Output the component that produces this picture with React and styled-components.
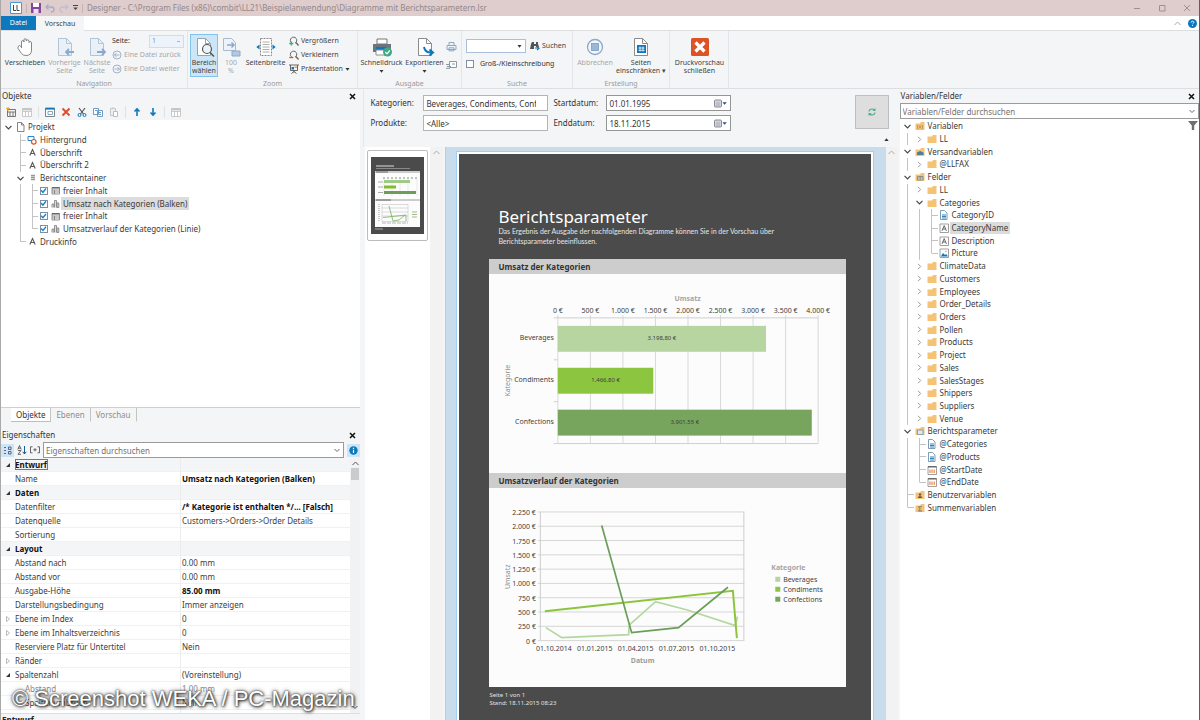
import React from "react";
import styled, { createGlobalStyle, css } from "styled-components";

const GlobalStyle = createGlobalStyle`
  *, *::before, *::after { box-sizing: border-box; }
  html, body { margin: 0; height: 100%; }
  body {
    font-family: "Noto Sans", "Open Sans", sans-serif;
    font-size: 8px;
    line-height: 12px;
    color: #333;
    background: #f4f5f6;
    overflow: hidden;
  }
  #root { height: 100%; }
  button, input, select { font: inherit; color: inherit; margin: 0; }
  button { background: none; border: 0; padding: 0; cursor: pointer; white-space: nowrap; }
  svg { display: block; flex: none; }
  p, h1, h2 { margin: 0; }
`;

const c = {
  blue: "#0d78bd",
  pale: "#cce6f8",
  line: "#dcdfe2",
  chrome: "#f4f5f6",
  muted: "#9a9a9a",
  folder: "#f5c376",
  paper: "#4b4b4b",
};

/* ---------- window ---------- */
const Window = styled.div`
  height: 100vh;
  display: flex;
  flex-direction: column;
  border-left: 1px solid #a9a9a9;
  border-right: 1px solid #6b5a5a;
  background: ${c.chrome};
`;
const TitleBar = styled.header`
  height: 16px;
  flex: none;
  display: flex;
  align-items: center;
  gap: 4px;
  padding: 0 8px 0 9px;
  background: #dfcccd;
  color: #938888;
`;
const TitleText = styled.h1`
  flex: 1;
  font-size: 8px;
  font-weight: 400;
  white-space: nowrap;
`;
const TitleSep = styled.span`
  width: 1px;
  height: 9px;
  background: #c7b3b4;
`;
const WindowButtons = styled.div`
  display: flex;
  gap: 17px;
`;
const TabRow = styled.nav`
  height: 15px;
  flex: none;
  display: flex;
  align-items: stretch;
  background: #fff;
  border-bottom: 1px solid ${c.line};
`;
const RibbonTab = styled.button`
  width: ${(p) => (p.$file ? 35 : 48)}px;
  font-size: 7px;
  color: ${(p) => (p.$file ? "#fff" : "#444")};
  background: ${(p) => (p.$file ? c.blue : c.chrome)};
  height: ${(p) => (p.$file ? 14 : 15)}px;
`;
const TabTools = styled.div`
  margin-left: auto;
  display: flex;
  align-items: center;
  gap: 7px;
  padding-right: 2px;
`;

/* ---------- ribbon ---------- */
const Ribbon = styled.div`
  height: 58px;
  flex: none;
  display: flex;
  font-size: 7px;
  line-height: 8px;
  border-bottom: 1px solid ${c.line};
`;
const Group = styled.section`
  width: ${(p) => p.$w}px;
  flex: none;
  display: flex;
  flex-direction: column;
  border-right: 1px solid #e3e5e8;
  padding: 3px 2px 0;
`;
const GroupBody = styled.div`
  height: 43px;
  display: flex;
`;
const GroupName = styled.div`
  text-align: center;
  color: ${c.muted};
  margin-top: 3px;
`;
const BigButton = styled.button`
  width: ${(p) => p.$w}px;
  height: 43px;
  flex: none;
  display: flex;
  flex-direction: column;
  align-items: center;
  padding-top: 2px;
  line-height: 8px;
  white-space: pre-line;
  border: 1px solid transparent;
  color: ${(p) => (p.disabled ? "#a4a8ad" : "#444")};
  ${(p) => p.$active && css`
    background: ${c.pale};
    border-color: #83c2ea;
  `}
  svg { margin-bottom: 2px; overflow: visible; }
  span { white-space: pre; }
`;
const SmallColumn = styled.div`
  display: flex;
  flex-direction: column;
  padding: ${(p) => p.$pad || "0"};
  gap: ${(p) => p.$gap || 0}px;
`;
const SmallButton = styled.button`
  display: flex;
  align-items: center;
  gap: 2px;
  height: 14px;
  color: ${(p) => (p.disabled ? "#a4a8ad" : "#444")};
`;
const PageLabel = styled.label`
  display: flex;
  align-items: center;
  justify-content: space-between;
  width: 72px;
  height: 14px;
`;
const PageSelect = styled.select`
  appearance: none;
  width: 35px;
  height: 13px;
  padding: 0 2px;
  border: 1px solid #d2dcea;
  border-radius: 0;
  color: #8c96a5;
  background:
    linear-gradient(#aab4c2, #aab4c2) right 3px center / 3px 1px no-repeat,
    #edf3fa;
`;
const FindRow = styled.div`
  display: flex;
  align-items: center;
  gap: 4px;
  height: 14px;
`;
const Combo = styled.div`
  display: flex;
  align-items: center;
  justify-content: space-between;
  flex: ${(p) => (p.$w ? "none" : 1)};
  width: ${(p) => (p.$w ? p.$w + "px" : "auto")};
  height: ${(p) => p.$h || 16}px;
  padding-right: 3px;
  border: 1px solid ${(p) => p.$edge || "#9b9b9b"};
  background: #fff;
`;
const BareInput = styled.input`
  flex: 1;
  min-width: 0;
  height: 100%;
  border: 0;
  outline: 0;
  padding: 0 0 0 2px;
  background: transparent;
  &::placeholder { color: #77706f; opacity: 1; }
`;
const CheckLabel = styled.label`
  display: flex;
  align-items: center;
  gap: 6px;
`;
const Tick = styled.input`
  appearance: none;
  width: 8px;
  height: 8px;
  flex: none;
  border: 1px solid #7f8fa3;
  background: #fff;
  display: grid;
  place-items: center;
  &:checked::before {
    content: "";
    width: 6px;
    height: 6px;
    background: #1583c9;
    clip-path: polygon(0 50%, 20% 34%, 40% 58%, 82% 4%, 100% 20%, 42% 94%);
  }
`;

/* ---------- panels ---------- */
const Work = styled.main`
  flex: 1;
  min-height: 0;
  display: grid;
  grid-template-columns: 30% minmax(0, 1fr) 25%;
`;
const Panel = styled.section`
  display: flex;
  flex-direction: column;
  min-height: 0;
  min-width: 0;
  background: ${(p) => (p.$white ? "#fff" : c.chrome)};
`;
const PanelHead = styled.div`
  height: 14px;
  flex: none;
  display: flex;
  align-items: center;
  justify-content: space-between;
  padding: 0 4px 0 1px;
  background: ${c.chrome};
  h2 { font-size: 8px; font-weight: 400; }
`;
const Toolbar = styled.div`
  height: 17px;
  flex: none;
  display: flex;
  align-items: center;
  gap: 6px;
  padding-left: 5px;
`;
const ToolSep = styled.span`
  width: 1px;
  height: 12px;
  background: #dfe2e5;
`;
const TreeBox = styled.div`
  flex: 9 1 0;
  min-height: 0;
  background: #fff;
  padding: 1px 0 0 ${(p) => p.$inset || 1}px;
  display: flex;
  align-items: flex-start;
  justify-content: space-between;
`;
const Tree = styled.ul`
  list-style: none;
  margin: 0;
  padding: 0;
  height: ${(p) => p.$h}px;
  display: grid;
  grid-auto-rows: 1fr;
`;
const TreeRow = styled.li`
  display: flex;
  align-items: stretch;
  white-space: nowrap;
`;
const guide = "linear-gradient(#c3c3c3, #c3c3c3)";
const Cell = styled.span`
  width: ${(p) => (p.$tick ? 11 : 12)}px;
  flex: none;
  display: flex;
  align-items: center;
  justify-content: center;
  background-repeat: no-repeat;
  ${(p) => p.$kind === "|" && css`
    background-image: ${guide};
    background-size: 1px 100%;
    background-position: center;
  `}
  ${(p) => p.$kind === "t" && css`
    background-image: ${guide}, ${guide};
    background-size: 1px 100%, 50% 1px;
    background-position: center, right center;
  `}
  ${(p) => p.$kind === "l" && css`
    background-image: ${guide}, ${guide};
    background-size: 1px 50%, 50% 1px;
    background-position: center top, right center;
  `}
`;
const TreeText = styled.span`
  display: flex;
  align-items: center;
  padding: 0 2px;
  color: #3a3a3a;
  background: ${(p) => (p.$selected ? "#dcdcdc" : "transparent")};
`;
const BottomTabs = styled.div`
  height: 21px;
  flex: none;
  display: flex;
  align-items: flex-start;
  padding-left: 10px;
  border-top: 1px solid #cfcfcf;
`;
const BottomTab = styled.button`
  height: 14px;
  padding: 0 5px 0 5px;
  color: ${(p) => (p.$active ? "#333" : "#928b8b")};
  background: ${(p) => (p.$active ? "#fff" : "transparent")};
  border-right: 1px solid #c4c4c4;
  border-bottom: 1px solid ${(p) => (p.$active ? "#bdbdbd" : "transparent")};
`;
const SearchRow = styled.div`
  height: 16px;
  flex: none;
  display: flex;
  align-items: center;
  gap: 3px;
`;
const ToggleButton = styled.button`
  width: 13px;
  height: 13px;
  display: grid;
  place-items: center;
  background: ${(p) => (p.$on ? c.pale : "transparent")};
`;
const PropArea = styled.div`
  flex: 8 1 0;
  min-height: 0;
  overflow: hidden;
  display: flex;
  background: #fff;
`;
const PropScroll = styled.div`
  flex: 1;
  overflow: hidden;
`;
const PropTable = styled.table`
  width: 100%;
  border-collapse: separate;
  border-spacing: 0;
  table-layout: fixed;
  background: #fff;
  td, th {
    height: 14px;
    padding: 0 0 0 1px;
    font-weight: 400;
    text-align: left;
    line-height: 13px;
    white-space: nowrap;
    overflow: hidden;
    border-bottom: 1px solid #f1f1f1;
  }
  th { border-right: 1px solid #ececec; }
`;
const PropRow = styled.tr`
  background: ${(p) => (p.$cat ? c.chrome : "transparent")};
  color: ${(p) => (p.$dim ? "#8b8b8b" : "#3c3c3c")};
  && th { font-weight: ${(p) => (p.$cat ? 700 : 400)}; padding-left: ${(p) => (p.$child ? 11 : 1)}px; }
  && td { font-weight: ${(p) => (p.$bold ? 700 : 400)}; }
  ${(p) => p.$cat && css`th { color: #111; }`}
  ${(p) => p.$bold && css`td:last-child { color: #111; }`}
`;
const FocusBox = styled.span`
  outline: ${(p) => (p.$on ? "1px solid #777" : "none")};
  outline-offset: -1px;
  padding-right: 1px;
`;
const ScrollBar = styled.div`
  width: ${(p) => p.$w || 10}px;
  flex: none;
  display: flex;
  flex-direction: column;
  align-items: center;
  padding: 3px 0;
  background: #f2f2f2;
  svg:last-child:not(:first-child) { margin-top: auto; }
`;
const Thumb = styled.span`
  width: 8px;
  height: 12px;
  margin-top: 2px;
  background: #cbcbcb;
`;
const PropHint = styled.div`
  height: 7px;
  flex: none;
  overflow: hidden;
  padding-left: 1px;
  line-height: 12px;
  font-weight: 700;
  color: #222;
  border-top: 1px solid ${c.line};
`;

/* ---------- preview ---------- */
const Params = styled.form`
  height: 58px;
  flex: none;
  display: flex;
  align-items: flex-start;
  margin: 0 2px 0 3px;
  padding: 6px 9px 0 6px;
  border-left: 1px solid #e5e7ea;
`;
const ParamGrid = styled.div`
  display: grid;
  grid-template-columns: 53px 125px 58px 125px;
  row-gap: 4px;
  align-items: center;
  label:nth-of-type(even) { padding-left: 5px; }
`;
const ParamInput = styled.div`
  height: 16px;
  display: flex;
  align-items: center;
  gap: 1px;
  padding-right: ${(p) => (p.$date ? 3 : 11)}px;
  border: 1px solid ${(p) => (p.$date ? "#959595" : "#b4b4b4")};
  background: #fff;
`;
const RefreshColumn = styled.div`
  margin-left: auto;
  display: flex;
  flex-direction: column;
  align-items: flex-end;
  gap: 9px;
`;
const RefreshButton = styled.button`
  width: 34px;
  height: 34px;
  display: grid;
  place-items: center;
  background: #dedede;
  border: 1px solid #bfbfbf;
`;
const PreviewRow = styled.div`
  flex: 1;
  min-height: 0;
  display: flex;
  padding: 0 2px 0 5px;
`;
const Thumbs = styled.div`
  width: 65px;
  flex: none;
  background: #fff;
  padding: 3px 2px;
`;
const ThumbCard = styled.button`
  display: block;
  width: 61px;
  height: 91px;
  padding: 6px 3px;
  border: 1px solid #bcbcbc;
  border-radius: 2px;
  background: #fff;
`;
const Canvas = styled.div`
  flex: 1;
  min-width: 0;
  overflow: hidden;
  padding: 7px 15px 0 13px;
  background: #c9dcec;
  border-left: 1px solid #b9cbdd;
  margin-left: 2px;
`;
const Paper = styled.article`
  min-height: 100%;
  padding: 53px 24px 30px 29px;
  background: ${c.paper};
  color: #fff;
  outline: 2px solid #fff;
  box-shadow: 0 0 0 3px #9fd0f4;
  border: 1px solid ${c.paper};
`;
const PaperTitle = styled.h1`
  padding-left: 9px;
  font-size: 17px;
  line-height: 18px;
  font-weight: 400;
`;
const PaperLead = styled.p`
  padding: 0 50px 13px 9px;
  font-family: Lato, "Noto Sans", sans-serif;
  font-size: 7px;
  line-height: 10px;
  color: #e6e6e6;
`;
const Card = styled.section`
  background: #fcfcfc;
`;
const CardHead = styled.h2`
  height: 15px;
  padding-left: 9px;
  font-size: 8px;
  line-height: 15px;
  font-weight: 700;
  color: #333;
  background: #cdcdcd;
`;
const ChartSvg = styled.svg`
  width: 100%;
  height: auto;
  font-size: 7px;
  fill: #3c3c3c;
`;
const PaperFoot = styled.p`
  padding-top: 4px;
  font-size: 6px;
  line-height: 8px;
  color: #e2e2e2;
`;
const Watermark = styled.div`
  position: absolute;
  left: 12px;
  bottom: 8px;
  font-family: "Liberation Sans", sans-serif;
  font-size: 22px;
  line-height: 26px;
  white-space: nowrap;
  color: #fff;
  text-shadow: 0 0 2px #333, 1px 1px 3px #222, 0 0 5px #666;
  pointer-events: none;
`;

/* ---------- icons ---------- */
const S = ({ w = 10, h, vb, children, ...r }) => (
  <svg width={w} height={h || w} viewBox={vb || `0 0 ${w} ${h || w}`} fill="none" aria-hidden="true" {...r}>
    {children}
  </svg>
);
const Close = () => <S w={7}><path d="M1 1l5 5M6 1L1 6" stroke="#111" strokeWidth="1.5" /></S>;
const Caret = ({ color = "#333" }) => <S w={5} h={3}><path d="M.5 0h4L2.500 2.800z" fill={color} /></S>;
const ChevDown = ({ color = "#666" }) => <S w={6} h={5}><path d="M.5 1L3 3.500 5.500 1" stroke={color} /></S>;
const ChevUp = ({ color = "#888" }) => <S w={7} h={5}><path d="M.5 4l3-3 3 3" stroke={color} /></S>;
const Sheet = ({ color = "#8b8b8b", fill = "#fff", arrow, children }) => (
  <S w={20}>
    <path d="M3.500 1.500h8l5 5v12h-13z" fill={fill} stroke={color} />
    <path d="M11.500 1.500v5h5" stroke={color} />
    {arrow}
    {children}
  </S>
);
const HandIcon = () => (
  <S w={20}>
    <path d="M6.500 11V5q0-1.500 1.200-1.500T9 5V3q0-1.300 1.200-1.300T11.400 3v1q.2-1.200 1.300-1.200T14 4.200v1.300q.3-1 1.300-1T16.500 6v7q0 5.500-5.500 5.500-3 0-4.500-2L3 11.500Q2.500 9 4.500 8.500l2 1.500" stroke="#777" fill="#fff" strokeWidth=".9" strokeLinejoin="round" />
  </S>
);
const ZoomArea = () => (
  <Sheet color="#9aa3ad">
    <circle cx="13" cy="12" r="4.500" fill="#e8f4fc" stroke="#555" strokeWidth="1.200" />
    <path d="M16 15.500l4 4" stroke="#555" strokeWidth="1.600" />
  </Sheet>
);
const WidthIcon = () => (
  <S w={20}>
    <path d="M4.500 1.500h11v17h-11z" fill="#fff" stroke="#888" strokeDasharray="2 1" />
    <path d="M6.500 5h7M6.500 7.500h7M6.500 10h7M6.500 12.500h7M6.500 15h7" stroke="#999" strokeWidth=".8" />
    <path d="M3.500 7.500v5L.3 10zM16.500 7.500v5l3.200-2.500z" fill={c.blue} />
  </S>
);
const PrinterBig = () => (
  <S w={22} h={20}>
    <path d="M6 2h10v5H6z" fill="#fff" stroke="#777" />
    <path d="M2 7h18v8H2z" fill="#6c757d" />
    <path d="M5 10h11v2H5z" fill={c.blue} />
    <path d="M5 13h11v5H5z" fill="#fff" stroke="#777" strokeWidth=".8" />
    <circle cx="16.500" cy="15" r="4.500" fill="#3fa982" />
    <path d="M14.300 15l1.700 1.800 2.800-3.300" stroke="#fff" strokeWidth="1.200" />
  </S>
);
const PrinterSmall = () => (
  <S w={11}>
    <path d="M3 1.500h5v3H3zM1 4.500h9v4H1zM3 6.800h5v3H3z" fill="#eef3f9" stroke="#8ea7c2" />
  </S>
);
const MailSmall = () => (
  <S w={11} h={9}>
    <path d="M3.500 1.500h7v6h-7z" fill="#fff" stroke="#8b98a6" />
    <path d="M6 4h3M0 4.500h3M1 6.500h4M0 8.300h4" stroke="#8b98a6" />
  </S>
);
const Magnifier = ({ sign }) => (
  <S w={10}>
    <path d="M2.500 6.800A3.200 3.200 0 1 1 6 7.200" stroke="#666" />
    <path d="M7 6.500l2.500 3" stroke="#666" strokeWidth="1.300" />
    <path d={sign === "+" ? "M.3 7.500h4M2.300 5.500v4" : "M.3 7.500h4"} stroke={sign === "+" ? "#3fa982" : "#d8502c"} strokeWidth="1.300" />
  </S>
);
const BoardIcon = () => (
  <S w={10}>
    <path d="M0 1h10M1.500 1v5.500h7V1M5 6.500v2M2.500 9.500L5 7.500l2.500 2" stroke="#666" />
    <path d="M2.500 3h2.500v2.500H2.500z" fill={c.blue} />
    <path d="M5.500 2.500H8V4H5.500z" fill="#e8a33d" />
  </S>
);
const CircleArrow = ({ flip }) => (
  <S w={10}>
    <circle cx="5" cy="5" r="4" stroke="#9fb2c9" />
    <path d={flip ? "M2.500 5h5M5.500 3l2 2-2 2" : "M7.500 5h-5M4.500 3l-2 2 2 2"} stroke="#9fb2c9" />
  </S>
);
const Binoculars = () => (
  <S w={10}>
    <path d="M2 1h2v2h2V1h2v2l1 3H6V5H4v3H0l1-5z" fill="#555" />
    <path d="M5 7h3M7 5.500L9 7.300 7 9" stroke={c.blue} strokeWidth="1.200" />
  </S>
);
const StopIcon = () => (
  <S w={20}>
    <circle cx="10" cy="10" r="7.500" fill="#f3f7fb" stroke="#8ba9cb" strokeWidth="1.300" />
    <rect x="6.500" y="6.500" width="7" height="7" fill="#9ab7d6" stroke="#7c9dc2" strokeWidth=".8" />
  </S>
);
const CloseBig = () => (
  <S w={20}>
    <rect x="1" y="1" width="18" height="18" rx="1.500" fill="#de5326" />
    <path d="M5.500 5.500l9 9M14.500 5.500l-9 9" stroke="#fff" strokeWidth="3.200" />
  </S>
);
const Grid = ({ color = "#777", accent }) => (
  <S w={10}>
    <path d="M.5 1.500h9v8h-9zM.5 4.500h9M3.500 4.500v5M6.500 4.500v5" stroke={color} strokeWidth=".9" fill="#fff" />
    <path d="M.5 2.500h9" stroke={accent || color} strokeWidth="1.800" />
  </S>
);
const PropsIcon = () => (
  <S w={10}>
    <path d="M.5 1h9v8.500h-9z" stroke="#6b7780" strokeWidth=".9" fill="#fff" />
    <path d="M.5 1.800h9" stroke={c.blue} strokeWidth="1.600" />
    <path d="M3 4.500h4.500v3H3z" stroke="#7f9db5" strokeWidth=".9" />
  </S>
);
const Copy = ({ color = "#6f9cc4" }) => (
  <S w={10}>
    <path d="M.5 1.500h5v6h-5zM4.500 3.500h5v6h-5z" fill="#fff" stroke={color} />
    <path d="M2 3.500h2M6 5.500h2M6 7.500h2" stroke={color} />
  </S>
);
const Paste = () => (
  <S w={10}>
    <path d="M1.500 1.500h5v7h-5z" fill="#eee" stroke="#c6c6c6" />
    <path d="M3 1.500q1-1.500 2 0M4.500 4.500h4v5h-4z" fill="#fff" stroke="#bcbcbc" />
  </S>
);
const Scissors = () => (
  <S w={10}>
    <path d="M2 1l4.500 6M8 1L3.500 7" stroke="#555" strokeWidth="1.200" />
    <circle cx="2.500" cy="8" r="1.500" stroke={c.blue} /><circle cx="7.500" cy="8" r="1.500" stroke={c.blue} />
  </S>
);
const Arrow = ({ down }) => (
  <S w={10}>
    <path d={down ? "M5 1v7M2.500 5.500L5 8l2.500-2.500" : "M5 9V2M2.500 4.500L5 2l2.500 2.500"} stroke={c.blue} strokeWidth="1.600" />
  </S>
);

const treeIcons = {
  page: <S w={9} h={10}><path d="M1.500.5h4l2.500 2.500v6.500H1.500zM5.500.5V3H8" stroke="#777" strokeWidth=".9" fill="#fff" /></S>,
  shapes: <S w={10}><path d="M1 1.500h6v4H1z" stroke="#2f86c5" fill="#fff" /><circle cx="6.800" cy="6.800" r="2.300" stroke="#de5326" fill="#fff" strokeWidth="1.200" /></S>,
  A: <S w={9}><path d="M1.800 7.500l2.700-6 2.700 6M2.800 5.500h3.400" stroke="#555" strokeWidth="1.100" /></S>,
  container: <S w={7} h={8}><path d="M2 1.500h4M2 3.500h4M2 5.500h4" stroke="#999" strokeWidth="1.300" /></S>,
  table: <S w={9}><path d="M1 1.500h7.500v6.500H1zM1 4h7.500M3.500 4v4M1 6h7.500" stroke="#777" strokeWidth=".8" /><path d="M1 1.800h7.500" stroke="#666" strokeWidth="1.500" /></S>,
  chart: <S w={9}><path d="M1 8.500V5h1.800v3.500M3.500 8.500V1.500h2v7M6 8.500V4h1.800v4.500z" stroke="#888" strokeWidth=".9" fill="#ddd" /></S>,
  folder: <S w={10}><path d="M.5 2.500H5L6 1h3.500v8h-9z" fill={c.folder} /></S>,
  folderVar: <S w={10}><path d="M.5 2.500H5L6 1h3.500v8h-9z" fill={c.folder} /><path d="M2.500 4v4M4 4.500l2 3M6 4.500l-2 3M7.500 4v4" stroke="#b58a53" strokeWidth=".8" /></S>,
  folderMail: <S w={10}><path d="M.5 2.500H5L6 1h3.500v8h-9z" fill={c.folder} /><path d="M2 5.500L5 4l3.500 1.500V8H2z" fill="#4c7da6" /></S>,
  folderField: <S w={10}><path d="M.5 2.500H5L6 1h3.500v8h-9z" fill={c.folder} /><path d="M2.500 4.500H8V8H2.500zM2.500 6H8M5.200 4.500V8" stroke="#7b7b7b" strokeWidth=".8" fill="#eee" /></S>,
  folderParam: <S w={10}><path d="M.5 2.500H5L6 1h3.500v8h-9z" fill={c.folder} /><path d="M2.500 4H8v4.500H2.500z" fill="#dfe9ee" stroke="#6a97ad" strokeWidth=".8" /></S>,
  folderUser: <S w={10}><path d="M.5 2.500H5L6 1h3.500v8h-9z" fill={c.folder} /><circle cx="5" cy="4.500" r="1.200" fill="#6d5c44" /><path d="M2.800 8q0-2 2.200-2t2.200 2z" fill="#6d5c44" /></S>,
  folderSum: <S w={10}><path d="M.5 2.500H5L6 1h3.500v8h-9z" fill={c.folder} /><path d="M7 3.800H3.500L5.300 6 3.500 8H7" stroke="#6d6d6d" strokeWidth=".9" /></S>,
  num: <S w={9} h={10}><path d="M1.500.5h4l2.500 2.500v6.500H1.500z" stroke="#7390a8" fill="#fff" strokeWidth=".9" /><path d="M3 5h4M3 6.500h4M3 8h4" stroke="#2f86c5" strokeWidth="1.100" /></S>,
  text: <S w={10}><path d="M1 1h8.500v8.500H1z" stroke="#888" strokeWidth=".8" fill="#fff" /><path d="M3 7.800L5.200 2.600l2.200 5.200M3.900 6h2.700" stroke="#555" strokeWidth=".9" /></S>,
  image: <S w={10}><path d="M1 1h8.500v8.500H1z" stroke="#888" strokeWidth=".8" fill="#fff" /><path d="M1.800 8.500L4 5l2 2 1.200-1L9 8.500z" fill={c.blue} /><circle cx="7" cy="3.500" r=".8" fill="#e8a33d" /></S>,
  date: <S w={10}><path d="M1 1.500h8.500v8H1z" stroke="#888" strokeWidth=".8" fill="#fff" /><path d="M1 1.800h8.500" stroke="#666" strokeWidth="1.400" /><path d="M3 4.500v3.500M5 4.500v3.500M7.200 4.500v3.500" stroke="#e5803f" strokeWidth="1.100" /></S>,
};

/* ---------- data ---------- */
const objects = [
  ["v", "page", "Projekt"],
  [" t", "shapes", "Hintergrund"],
  [" t", "A", "Überschrift"],
  [" t", "A", "Überschrift 2"],
  [" v", "container", "Berichtscontainer"],
  [" |t", "table", "freier Inhalt", { check: true }],
  [" |t", "chart", "Umsatz nach Kategorien (Balken)", { check: true, selected: true }],
  [" |t", "table", "freier Inhalt", { check: true }],
  [" |l", "chart", "Umsatzverlauf der Kategorien (Linie)", { check: true }],
  [" l", "A", "Druckinfo"],
];
const fields = [
  ["v", "folderVar", "Variablen"],
  ["|>", "folder", "LL"],
  ["v", "folderMail", "Versandvariablen"],
  ["|>", "folder", "@LLFAX"],
  ["v", "folderField", "Felder"],
  ["|>", "folder", "LL"],
  ["|v", "folder", "Categories"],
  ["||t", "num", "CategoryID"],
  ["||t", "text", "CategoryName", { selected: true }],
  ["||t", "text", "Description"],
  ["||l", "image", "Picture"],
  ...["ClimateData", "Customers", "Employees", "Order_Details", "Orders", "Pollen", "Products", "Project", "Sales", "SalesStages", "Shippers", "Suppliers", "Venue"].map((n) => ["|>", "folder", n]),
  ["v", "folderParam", "Berichtsparameter"],
  ["|t", "num", "@Categories"],
  ["|t", "num", "@Products"],
  ["|t", "date", "@StartDate"],
  ["|l", "date", "@EndDate"],
  ["t", "folderUser", "Benutzervariablen"],
  ["l", "folderSum", "Summenvariablen"],
];
const props = [
  { n: "Entwurf", cat: true, focus: true },
  { n: "Name", v: "Umsatz nach Kategorien (Balken)", bold: true },
  { n: "Daten", cat: true },
  { n: "Datenfilter", v: "/* Kategorie ist enthalten */... [Falsch]", bold: true },
  { n: "Datenquelle", v: "Customers->Orders->Order Details" },
  { n: "Sortierung" },
  { n: "Layout", cat: true },
  { n: "Abstand nach", v: "0.00 mm" },
  { n: "Abstand vor", v: "0.00 mm" },
  { n: "Ausgabe-Höhe", v: "85.00 mm", bold: true },
  { n: "Darstellungsbedingung", v: "Immer anzeigen" },
  { n: "Ebene im Index", v: "0", sub: true },
  { n: "Ebene im Inhaltsverzeichnis", v: "0", sub: true },
  { n: "Reserviere Platz für Untertitel", v: "Nein" },
  { n: "Ränder", sub: true },
  { n: "Spaltenzahl", v: "(Voreinstellung)", open: true },
  { n: "Abstand", v: "1.00 mm", dim: true, child: true },
  { n: "Spaltenumbruch", v: "Nein", child: true },
  { n: "Umbruch", v: "Nein" },
];

const TreeView = ({ items, height, label }) => (
  <Tree $h={height} aria-label={label}>
    {items.map(([guides, icon, text, o = {}], i) => (
      <TreeRow key={i}>
        {[...guides].map((g, k) => (
          <Cell key={k} $kind={g}>
            {g === "v" && <S w={7} h={5}><path d="M.5 .8l3 3 3-3" stroke="#444" strokeWidth="1.200" /></S>}
            {g === ">" && <S w={5} h={7}><path d="M1 .8l2.700 2.700L1 6.200" stroke="#999" /></S>}
          </Cell>
        ))}
        {o.check && <Cell $tick><Tick type="checkbox" defaultChecked aria-label={text} /></Cell>}
        <Cell>{treeIcons[icon]}</Cell>
        <TreeText $selected={o.selected}>{text}</TreeText>
      </TreeRow>
    ))}
  </Tree>
);

/* ---------- charts ---------- */
const bars = [
  ["Beverages", 3198.8, "3.198,80 €", "#b7d5a0"],
  ["Condiments", 1466.8, "1.466,80 €", "#8cc540"],
  ["Confections", 3901.55, "3.901,55 €", "#78a55e"],
];
const euro = (n) => `${String(n).replace(/(\d)(\d{3})$/, "$1.$2")} €`;
const BarChart = () => {
  const x = (v) => 69 + (v * 261) / 4000;
  return (
    <ChartSvg viewBox="0 0 357 199" role="img" aria-label="Umsatz der Kategorien">
      <text x="199" y="27" textAnchor="middle" fill="#a5a5a5" fontWeight="700">Umsatz</text>
      {[0, 500, 1000, 1500, 2000, 2500, 3000, 3500, 4000].map((v) => (
        <g key={v}>
          <path d={`M${x(v)} 41V170`} stroke="#d9d9d9" />
          <text x={x(v)} y="39" textAnchor="middle">{euro(v)}</text>
        </g>
      ))}
      <path d="M65 44H330M69 170H330M65 86h4M65 128h4M65 170h4" stroke="#cfcfcf" />
      {bars.map(([n, v, t, f], i) => (
        <g key={n}>
          <rect x="69" y={52 + i * 42} width={x(v) - 69} height="26" fill={f} />
          <text x="65" y={66 + i * 42} textAnchor="end">{n}</text>
          <text x={(69 + x(v)) / 2} y={66 + i * 42} textAnchor="middle" fontSize="6">{t}</text>
        </g>
      ))}
      <text transform="translate(21 107) rotate(-90)" textAnchor="middle" fill="#8d8d8d">Kategorie</text>
    </ChartSvg>
  );
};
const LineChart = () => {
  const y = (v) => 153 - (v * 129) / 2250;
  return (
    <ChartSvg viewBox="0 0 357 200" role="img" aria-label="Umsatzverlauf der Kategorien">
      {[0, 250, 500, 750, 1000, 1250, 1500, 1750, 2000, 2250].map((v) => (
        <g key={v}>
          <path d={`M49 ${y(v)}H256`} stroke="#d6d6d6" />
          <text x="47" y={y(v) + 3} textAnchor="end">{euro(v)}</text>
        </g>
      ))}
      <path d="M51.500 24v129M255.500 24v129" stroke="#cdcdcd" />
      {["01.10.2014", "01.01.2015", "01.04.2015", "01.07.2015", "01.10.2015"].map((d, i) => (
        <text key={d} x={65 + i * 41} y="163" textAnchor="middle">{d}</text>
      ))}
      <g strokeWidth="1.700" fill="none">
        <path d="M57 140l16 10 67-3 .5-9.500L167 114l31 8 49 16 2-9" stroke="#b4d7a0" />
        <path d="M56 123.500L244.500 103l4 47.500" stroke="#8cc53c" strokeWidth="2" />
        <path d="M113 37.500L143 145l47-5 49.500-40.500" stroke="#6a9e58" />
      </g>
      <text x="154" y="175" textAnchor="middle" fill="#9b9b9b" fontWeight="700">Datum</text>
      <text transform="translate(21 89) rotate(-90)" textAnchor="middle" fill="#8d8d8d">Umsatz</text>
      <text x="283" y="82" fill="#a5a5a5" fontWeight="700">Kategorie</text>
      {bars.map(([n, , , f], i) => (
        <g key={n}>
          <rect x="287" y={89 + i * 10} width="5" height="5" fill={f} />
          <text x="295" y={94 + i * 10}>{n}</text>
        </g>
      ))}
    </ChartSvg>
  );
};
const MiniPage = () => (
  <svg width="53" height="77" viewBox="0 0 53 77">
    <path d="M0 0h53v77H0z" fill={c.paper} />
    <path d="M5 9h18" stroke="#ddd" /><path d="M5 11.500h34" stroke="#999" strokeWidth=".8" />
    <path d="M4 14h45v56H4z" fill="#fcfcfc" />
    <path d="M4 14h45v2H4zM4 42h45v2H4z" fill="#ccc" />
    <path d="M5 15h12M5 43h15" stroke="#555" strokeWidth=".8" />
    <path d="M12 21h34" stroke="#888" strokeDasharray="2 2" />
    <path d="M13 22v17M21 22v17M29 22v17M37 22v17M46 22v17" stroke="#ddd" strokeWidth=".6" />
    <path d="M13 23h26v3H13z" fill="#9ecb85" /><path d="M13 28.500h12v3H13z" fill="#7fbf2f" /><path d="M13 34h32v3H13z" fill="#6a9e58" />
    <path d="M7 25h5M7 30h5M7 35.500h5" stroke="#888" strokeWidth=".7" />
    <path d="M11 47.500h26v17H11zM11 51h26M11 55h26M11 59h26" stroke="#ccc" strokeWidth=".7" fill="none" />
    <path d="M8 47v18" stroke="#999" strokeDasharray="1 1" /><path d="M11 66h26" stroke="#999" strokeDasharray="4 1" strokeWidth=".7" />
    <path d="M12 60.500l23-2.500v6M18 49l4 15 6-1 6-5" stroke="#78b05e" strokeWidth=".8" fill="none" />
    <path d="M41 55h5M41 57.500h5M41 60h5" stroke="#9dbb8d" />
    <path d="M4 72h8" stroke="#bbb" strokeWidth=".8" />
  </svg>
);

const dim = "#a8bad0";

export default function App() {
  return (
    <Window>
      <GlobalStyle />
      <TitleBar>
        <S w={12}>
          <path d="M.5.5h11v11H.5z" fill="#fff" stroke="#4b9ace" />
          <path d="M3.500 3v5.500H6M7 3v5.500h2.500" stroke="#444" />
        </S>
        <TitleSep />
        <S w={10}>
          <path d="M0 0h10v10H0z" fill="#84479b" />
          <path d="M2 0h6v4H2z" fill="#fff" /><path d="M2.500 6h5v4h-5z" fill="#ecdff0" />
        </S>
        <S w={10}><path d="M1 4h5q3 0 3 2.500T6 9M3.500 1.500L1 4l2.500 2.500" stroke="#a3aec6" strokeWidth="1.300" /></S>
        <S w={10}><path d="M9 4H4Q1 4 1 6.500T4 9M6.500 1.500L9 4 6.500 6.500" stroke="#bfc0cd" strokeWidth="1.300" /></S>
        <S w={5} h={6}><path d="M0 .5h5" stroke="#444" /><path d="M.2 2.500h4.600L2.500 5z" fill="#444" /></S>
        <TitleSep />
        <TitleText>Designer - C:\Program Files (x86)\combit\LL21\Beispielanwendung\Diagramme mit Berichtsparametern.lsr</TitleText>
        <WindowButtons>
          <button aria-label="Minimieren"><S w={8}><path d="M1 4.500h6" stroke="#a08f8f" /></S></button>
          <button aria-label="Maximieren"><S w={8}><path d="M1.500 1.500h5.500v5.500H1.500z" stroke="#a08f8f" /></S></button>
          <button aria-label="Schließen"><S w={8}><path d="M1 1l6 6M7 1L1 7" stroke="#a08f8f" /></S></button>
        </WindowButtons>
      </TitleBar>

      <TabRow>
        <RibbonTab $file>Datei</RibbonTab>
        <RibbonTab>Vorschau</RibbonTab>
        <TabTools>
          <button aria-label="Menüband einklappen"><ChevUp color="#aaa" /></button>
          <button aria-label="Hilfe">
            <S w={9}>
              <circle cx="4.500" cy="4.500" r="4.500" fill={c.blue} />
              <path d="M3.200 3.500q0-1.300 1.300-1.300t1.300 1.200q0 .7-1.300 1.500M4.500 6v1" stroke="#fff" strokeWidth=".9" />
            </S>
          </button>
        </TabTools>
      </TabRow>

      <Ribbon>
        <Group $w={187}>
          <GroupBody>
            <BigButton $w={44}><HandIcon />Verschieben</BigButton>
            <BigButton $w={35} disabled>
              <Sheet color="#b3c4d8" fill="#e9f0f8" arrow={<path d="M19 15h-8M14 12l-3 3 3 3" stroke="#8ba9cb" strokeWidth="1.800" />} />
              <span>{"Vorherige\nSeite"}</span>
            </BigButton>
            <BigButton $w={30} disabled>
              <Sheet color="#b3c4d8" fill="#e9f0f8" arrow={<path d="M10 15h8M15 12l3 3-3 3" stroke="#8ba9cb" strokeWidth="1.800" />} />
              <span>{"Nächste\nSeite"}</span>
            </BigButton>
            <SmallColumn>
              <PageLabel>Seite:<PageSelect><option>1</option></PageSelect></PageLabel>
              <SmallButton disabled><CircleArrow />Eine Datei zurück</SmallButton>
              <SmallButton disabled><CircleArrow flip />Eine Datei weiter</SmallButton>
            </SmallColumn>
          </GroupBody>
          <GroupName>Navigation</GroupName>
        </Group>

        <Group $w={170}>
          <GroupBody>
            <BigButton $w={28} $active><ZoomArea /><span>{"Bereich\nwählen"}</span></BigButton>
            <BigButton $w={26} disabled>
              <S w={20}>
                <path d="M2.500 1.500h8l4 4v8h-12z" fill="#eef3f9" stroke={dim} />
                <path d="M6 8h7M10.500 5.500L13 8l-2.500 2.500" stroke="#8ba9cb" strokeWidth="1.500" />
                <path d="M11 14h8v5h-8z" fill="#b4c8de" stroke="#8ba9cb" />
              </S>
              <span>{"100\n%"}</span>
            </BigButton>
            <BigButton $w={43}><WidthIcon />Seitenbreite</BigButton>
            <SmallColumn $pad="0 0 0 2px">
              <SmallButton><Magnifier sign="+" />Vergrößern</SmallButton>
              <SmallButton><Magnifier sign="-" />Verkleinern</SmallButton>
              <SmallButton><BoardIcon />Präsentation<Caret /></SmallButton>
            </SmallColumn>
          </GroupBody>
          <GroupName>Zoom</GroupName>
        </Group>

        <Group $w={104}>
          <GroupBody>
            <BigButton $w={43}><PrinterBig />Schnelldruck<S w={5} h={7}><path d="M.5 3h4L2.500 5.800z" fill="#333" /></S></BigButton>
            <BigButton $w={43}>
              <Sheet arrow={<path d="M9 10q1 6 8 5.500M14.500 12.500l3.500 3-3.500 3" stroke={c.blue} strokeWidth="2" />} />
              Exportieren<S w={5} h={7}><path d="M.5 3h4L2.500 5.800z" fill="#333" /></S>
            </BigButton>
            <SmallColumn $pad="7px 0 0 0" $gap={8}>
              <button aria-label="Drucken"><PrinterSmall /></button>
              <button aria-label="Senden"><MailSmall /></button>
            </SmallColumn>
          </GroupBody>
          <GroupName>Ausgabe</GroupName>
        </Group>

        <Group $w={111}>
          <GroupBody>
            <SmallColumn $pad="5px 0 0 2px" $gap={7}>
              <FindRow>
                <Combo $w={60} $h={14} $edge="#a9bfdc"><BareInput aria-label="Suchtext" /><Caret /></Combo>
                <SmallButton><Binoculars />Suchen</SmallButton>
              </FindRow>
              <CheckLabel><Tick type="checkbox" />Groß-/Kleinschreibung</CheckLabel>
            </SmallColumn>
          </GroupBody>
          <GroupName>Suche</GroupName>
        </Group>

        <Group $w={97}>
          <GroupBody>
            <BigButton $w={40} disabled><StopIcon />Abbrechen</BigButton>
            <BigButton $w={52}>
              <Sheet><path d="M6 8h9v8H6z" fill={c.blue} /><path d="M9 9.500v5M12 9.500v5M7.500 11h6M7.500 13.300h6" stroke="#fff" strokeWidth=".8" /></Sheet>
              <span>{"Seiten\neinschränken ▾"}</span>
            </BigButton>
          </GroupBody>
          <GroupName>Erstellung</GroupName>
        </Group>

        <Group $w={59}>
          <GroupBody>
            <BigButton $w={55}><CloseBig /><span>{"Druckvorschau\nschließen"}</span></BigButton>
          </GroupBody>
        </Group>
      </Ribbon>

      <Work>
        <Panel>
          <PanelHead><h2>Objekte</h2><button aria-label="Objekte schließen"><Close /></button></PanelHead>
          <Toolbar>
            <button aria-label="Neues Objekt"><S w={10}><path d="M1.500 2.500h8v7h-8zM1.500 5h8M4 5v4.500M7 5v4.500" stroke="#777" /><path d="M0 1.500h4M2 0v4" stroke="#eda93b" strokeWidth="1.200" /></S></button>
            <button aria-label="Einfügen"><Grid color="#c4c4c4" /></button>
            <ToolSep />
            <button aria-label="Eigenschaften"><PropsIcon /></button>
            <button aria-label="Löschen"><S w={10}><path d="M1.500 1.500l7 7M8.500 1.500l-7 7" stroke="#e0492a" strokeWidth="1.800" /></S></button>
            <button aria-label="Ausschneiden"><Scissors /></button>
            <button aria-label="Kopieren"><Copy /></button>
            <button aria-label="Einsetzen"><Paste /></button>
            <ToolSep />
            <button aria-label="Nach oben"><Arrow /></button>
            <button aria-label="Nach unten"><Arrow down /></button>
            <ToolSep />
            <button aria-label="Anordnen"><Grid color="#c4c4c4" /></button>
          </Toolbar>
          <TreeBox><TreeView items={objects} height={127} label="Objekte" /></TreeBox>
          <BottomTabs>
            <BottomTab $active>Objekte</BottomTab>
            <BottomTab>Ebenen</BottomTab>
            <BottomTab>Vorschau</BottomTab>
          </BottomTabs>
          <PropPanel />
        </Panel>

        <Panel>
          <Params onSubmit={(e) => e.preventDefault()}>
            <ParamGrid>
              <label htmlFor="kat">Kategorien:</label>
              <ParamInput><BareInput id="kat" defaultValue="Beverages, Condiments, Confections" /></ParamInput>
              <label htmlFor="start">Startdatum:</label>
              <ParamInput $date><BareInput id="start" defaultValue="01.01.1995" /><DateDrop /></ParamInput>
              <label htmlFor="prod">Produkte:</label>
              <ParamInput><BareInput id="prod" defaultValue="<Alle>" /></ParamInput>
              <label htmlFor="end">Enddatum:</label>
              <ParamInput $date><BareInput id="end" defaultValue="18.11.2015" /><DateDrop /></ParamInput>
            </ParamGrid>
            <RefreshColumn>
              <RefreshButton aria-label="Aktualisieren">
                <S w={8}>
                  <path d="M1 3.500Q1.500 1 4 1q1.500 0 2.500 1M7 4.500Q6.500 7 4 7 2.500 7 1.500 6" stroke="#4cae8b" strokeWidth="1.200" />
                  <path d="M7.500 0v3h-3zM.5 8V5h3z" fill="#4cae8b" />
                </S>
              </RefreshButton>
              <S w={5} h={3}><path d="M.3 3h4.400L2.500.3z" fill="#333" /></S>
            </RefreshColumn>
          </Params>
          <PreviewRow>
            <Thumbs><ThumbCard aria-label="Seite 1"><MiniPage /></ThumbCard></Thumbs>
            <ScrollBar $w={13}><ChevUp color="#aaa" /></ScrollBar>
            <Canvas>
              <Paper>
                <PaperTitle>Berichtsparameter</PaperTitle>
                <PaperLead>Das Ergebnis der Ausgabe der nachfolgenden Diagramme können Sie in der Vorschau über Berichtsparameter beeinflussen.</PaperLead>
                <Card>
                  <CardHead>Umsatz der Kategorien</CardHead>
                  <BarChart />
                  <CardHead>Umsatzverlauf der Kategorien</CardHead>
                  <LineChart />
                </Card>
                <PaperFoot>Seite 1 von 1<br />Stand: 18.11.2015 08:23</PaperFoot>
              </Paper>
            </Canvas>
            <ScrollBar $w={12}><ChevUp color="#aaa" /></ScrollBar>
          </PreviewRow>
        </Panel>

        <Panel $white>
          <PanelHead><h2>Variablen/Felder</h2><button aria-label="Variablen schließen"><Close /></button></PanelHead>
          <SearchRow>
            <Combo><BareInput placeholder="Variablen/Felder durchsuchen" aria-label="Variablen/Felder durchsuchen" /><ChevDown /></Combo>
          </SearchRow>
          <TreeBox $inset={2}>
            <TreeView items={fields} height={394} label="Variablen/Felder" />
            <button aria-label="Filter"><S w={11}><path d="M0 1h10L6.200 5.500V10H3.800V5.500z" fill="#6f6f6f" /></S></button>
          </TreeBox>
        </Panel>
      </Work>
      <Watermark>© Screenshot WEKA / PC-Magazin</Watermark>
    </Window>
  );
}

function DateDrop() {
  return (
    <S w={13} h={9}>
      <rect x=".5" y="1" width="7" height="7" rx="1" fill="#d4d4dc" stroke="#8b8b95" />
      <path d="M2 4h4M2 6h4" stroke="#aaaab5" />
      <path d="M8.500 3.200h4.300l-2.200 2.600z" fill="#274f86" />
    </S>
  );
}

function PropPanel() {
  return (
    <>
      <PanelHead><h2>Eigenschaften</h2><button aria-label="Eigenschaften schließen"><Close /></button></PanelHead>
      <SearchRow>
        <ToggleButton $on aria-label="Nach Kategorie">
          <S w={9}><path d="M1 1.500h2M1 4.500h2M1 7.500h2M5.500 1h2.500v2.500H5.500zM5.500 5.500h2.500v2.500H5.500z" stroke="#557" strokeWidth=".9" /></S>
        </ToggleButton>
        <button aria-label="Alphabetisch">
          <S w={10}><path d="M.8 4.500l1.700-4 1.700 4M1.300 3.200h2.400M1 5.500h3L1 9.300h3" stroke="#555" strokeWidth=".9" /><path d="M7.500 1v8M5.800 6.800L7.500 9l1.700-2.200" stroke="#1d5a96" /></S>
        </button>
        <button aria-label="Alle erweitern">
          <S w={10} h={8}><path d="M2.500.8h-2v6h2M7.500.8h2v6h-2M3.300 3.800h3.400M5 2.200v3.200" stroke="#555" strokeWidth=".9" /></S>
        </button>
        <Combo><BareInput placeholder="Eigenschaften durchsuchen" aria-label="Eigenschaften durchsuchen" /><ChevDown /></Combo>
        <ToggleButton $on aria-label="Information">
          <S w={9}><circle cx="4.500" cy="4.500" r="4.200" fill={c.blue} /><path d="M4.500 3.800V7M4.500 1.800V3" stroke="#fff" strokeWidth="1.200" /></S>
        </ToggleButton>
      </SearchRow>
      <PropArea>
        <PropScroll>
          <PropTable>
            <colgroup><col width="13" /><col width="167" /><col /></colgroup>
            <tbody>
              {props.map((r, i) => (
                <PropRow key={i} $cat={r.cat} $bold={r.bold} $dim={r.dim} $child={r.child}>
                  <td>
                    {(r.cat || r.open) && <S w={10} h={6}><path d="M8 1v4H4z" fill="#333" /></S>}
                    {r.sub && <S w={10} h={6}><path d="M4.500.5v5l3-2.500z" stroke="#aaa" strokeWidth=".8" /></S>}
                  </td>
                  <th scope="row"><FocusBox $on={r.focus}>{r.n}</FocusBox></th>
                  <td>{r.v}</td>
                </PropRow>
              ))}
            </tbody>
          </PropTable>
        </PropScroll>
        <ScrollBar><ChevUp color="#555" /><Thumb /><ChevDown color="#555" /></ScrollBar>
      </PropArea>
      <PropHint>Entwurf</PropHint>
    </>
  );
}
